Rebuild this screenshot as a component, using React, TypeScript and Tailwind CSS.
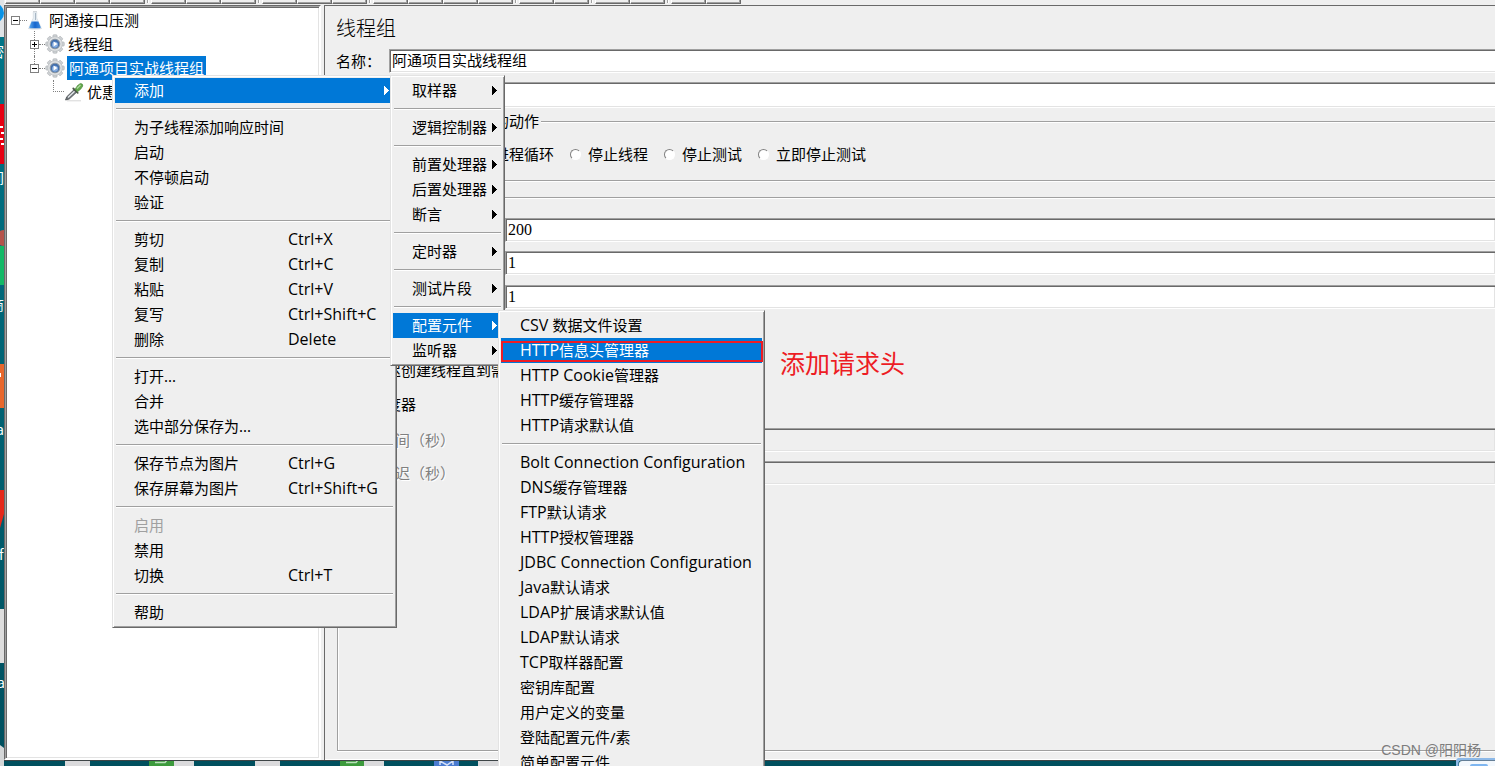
import clsx from "clsx";
import type { ReactNode } from "react";

interface MenuEntry {
  label: string;
  keys?: string;
  disabled?: boolean;
  active?: boolean;
  submenu?: ReactNode;
}

type MenuGroup = MenuEntry[];

const SUNKEN =
  "border border-t-[#a0a0a0] border-l-[#a0a0a0] border-b-white border-r-white shadow-[inset_1px_1px_0_#696969,inset_-1px_-1px_0_#e3e3e3]";
const RAISED =
  "border border-t-[#e3e3e3] border-l-[#e3e3e3] border-b-[#696969] border-r-[#696969] shadow-[inset_1px_1px_0_#ffffff,inset_-1px_-1px_0_#a0a0a0]";
const ETCHED =
  "border border-r-0 border-[#a0a0a0] shadow-[0_1px_0_#ffffff,inset_1px_1px_0_#ffffff]";

const toolbarGroups = [4, 3, 3, 4, 2, 2, 2];

const configGroups: MenuGroup[] = [
  [
    { label: "CSV 数据文件设置" },
    { label: "HTTP信息头管理器", active: true },
    { label: "HTTP Cookie管理器" },
    { label: "HTTP缓存管理器" },
    { label: "HTTP请求默认值" },
  ],
  [
    { label: "Bolt Connection Configuration" },
    { label: "DNS缓存管理器" },
    { label: "FTP默认请求" },
    { label: "HTTP授权管理器" },
    { label: "JDBC Connection Configuration" },
    { label: "Java默认请求" },
    { label: "LDAP扩展请求默认值" },
    { label: "LDAP默认请求" },
    { label: "TCP取样器配置" },
    { label: "密钥库配置" },
    { label: "用户定义的变量" },
    { label: "登陆配置元件/素" },
    { label: "简单配置元件" },
  ],
];

const Arrow = () => (
  <svg viewBox="0 0 5 9" className="h-[9px] w-[5px] shrink-0 fill-current" shapeRendering="crispEdges">
    <path d="M0 0h1v1h1v1h1v1h1v1h1v1h-1v1h-1v1h-1v1h-1v1h-1z" />
  </svg>
);

// latin runs are set one size larger than the Chinese text beside them
const MenuText = ({ text }: { text: string }) => (
  <>
    {text.split(/([A-Za-z+ ]+)/).map((part, index) =>
      index % 2 === 1 ? (
        <span key={index} className="whitespace-pre font-['Open_Sans',sans-serif] text-base leading-5">
          {part}
        </span>
      ) : (
        part
      ),
    )}
  </>
);

interface MenuProps {
  groups: MenuGroup[];
  className: string;
  hasArrows?: boolean;
}

const Menu = ({ groups, className, hasArrows }: MenuProps) => (
  <div role="menu" className={clsx("absolute bg-[#efefef] p-[2px] text-[15px] text-black", RAISED, className)}>
    {groups.map((group, index) => (
      <ul key={index}>
        {index > 0 && (
          <li role="separator" className="mx-px h-3 pt-[5px]">
            <div className="h-[2px] border-b border-t border-b-white border-t-[#a0a0a0]" />
          </li>
        )}
        {group.map((item) => (
          <li key={item.label} className="relative">
            <button
              role="menuitem"
              disabled={item.disabled}
              className={clsx(
                "flex h-[25px] w-full items-center whitespace-nowrap pl-[19px] text-left leading-[25px]",
                item.active && "bg-[#0078d7] text-white",
                item.disabled && "text-[#a0a0a0]",
              )}
            >
              <span className={item.keys ? "w-[154px]" : "flex-1"}>
                <MenuText text={item.label} />
              </span>
              {item.keys && (
                <span>
                  <MenuText text={item.keys} />
                </span>
              )}
              {(hasArrows || item.submenu) && (
                <span className="mr-[5px]">
                  <Arrow />
                </span>
              )}
            </button>
            {item.active && !item.submenu && (
              <div className="pointer-events-none absolute -right-px bottom-[1px] left-0 top-[3px] border-2 border-[#ed1c24]" />
            )}
            {item.submenu}
          </li>
        ))}
      </ul>
    ))}
  </div>
);

const addGroups: MenuGroup[] = [
  [{ label: "取样器" }],
  [{ label: "逻辑控制器" }],
  [{ label: "前置处理器" }, { label: "后置处理器" }, { label: "断言" }],
  [{ label: "定时器" }],
  [{ label: "测试片段" }],
  [
    {
      label: "配置元件",
      active: true,
      submenu: <Menu groups={configGroups} className="-top-[3px] left-[105px] z-20 w-[267px]" />,
    },
    { label: "监听器" },
  ],
];

const contextGroups: MenuGroup[] = [
  [
    {
      label: "添加",
      active: true,
      submenu: <Menu groups={addGroups} hasArrows className="-top-[3px] left-[275px] z-10 w-[115px]" />,
    },
  ],
  [{ label: "为子线程添加响应时间" }, { label: "启动" }, { label: "不停顿启动" }, { label: "验证" }],
  [
    { label: "剪切", keys: "Ctrl+X" },
    { label: "复制", keys: "Ctrl+C" },
    { label: "粘贴", keys: "Ctrl+V" },
    { label: "复写", keys: "Ctrl+Shift+C" },
    { label: "删除", keys: "Delete" },
  ],
  [{ label: "打开..." }, { label: "合并" }, { label: "选中部分保存为..." }],
  [
    { label: "保存节点为图片", keys: "Ctrl+G" },
    { label: "保存屏幕为图片", keys: "Ctrl+Shift+G" },
  ],
  [{ label: "启用", disabled: true }, { label: "禁用" }, { label: "切换", keys: "Ctrl+T" }],
  [{ label: "帮助" }],
];

const FlaskIcon = () => (
  <svg viewBox="0 0 16 20" className="h-5 w-4 shrink-0">
    <defs>
      <linearGradient id="liquid" x1="0" x2="1">
        <stop offset="0" stopColor="#5aa8ee" />
        <stop offset="0.5" stopColor="#1766cc" />
        <stop offset="1" stopColor="#3f8de0" />
      </linearGradient>
    </defs>
    <ellipse cx="8" cy="18.4" rx="7" ry="1.2" fill="#d5d9de" />
    <path d="M6.3 2h3.4v6l4.2 9q.3 1.400-1 1.400H3.100q-1.300 0-1-1.400l4.200-9z" fill="#e6eef5" stroke="#d3dae0" strokeWidth=".7" />
    <path d="M4.600 11.500h6.800l2.300 5.700q.1 1-1 1H3.300q-1.100 0-1-1z" fill="url(#liquid)" />
    <path d="M8.500 3v7" stroke="#a9b7c4" strokeWidth="1" />
    <path d="M6 1.500h4" stroke="#d2d6da" strokeWidth="1" />
  </svg>
);

const GearIcon = () => (
  <svg viewBox="0 0 20 20" className="h-5 w-5 shrink-0">
    <g fill="#cdd0d3" stroke="#a4a8ac" strokeWidth=".5">
      {[0, 45, 90, 135, 180, 225, 270, 315].map((angle) => (
        <rect key={angle} x="7.900" y=".7" width="4.200" height="4.500" rx="1" transform={`rotate(${angle} 10 10)`} />
      ))}
    </g>
    <circle cx="10" cy="10" r="7.300" fill="#dfe1e3" stroke="#b4b8bc" strokeWidth=".6" />
    <circle cx="10" cy="10" r="4.800" fill="#426fae" stroke="#8d979f" strokeWidth="1" />
    <circle cx="10" cy="10.800" r="3" fill="#86ade0" />
    <path d="M8.600 7.600 12.400 10l-3.800 2.400z" fill="#fff" />
  </svg>
);

const DropperIcon = () => (
  <svg viewBox="0 0 20 20" className="h-5 w-5 shrink-0">
    <path d="M3 18.800h14" stroke="#d6d6d6" />
    <path d="m1.500 18 1.200-3.200 7.500-7.300 2.600 2.600-7.600 7z" fill="#6d7378" stroke="#3f4346" strokeWidth=".7" />
    <path d="m4 15.500 6.600-6.300" stroke="#e5e9ec" strokeWidth="1.300" />
    <path d="m9.300 6.500 4.400 4.300" stroke="#4d5a4a" strokeWidth="1.800" strokeLinecap="round" />
    <path d="M11 7.200q2.500-4.600 5.300-5.700 2.700-.2 2.500 2.500-1.200 3-5.200 5.700z" fill="#62a84c" stroke="#47843a" strokeWidth=".6" />
    <path d="m13 6.500 3.500-3.500" stroke="#b2dca2" strokeWidth="1.200" />
  </svg>
);

const Expander = ({ open }: { open?: boolean }) => (
  <button aria-label={open ? "折叠" : "展开"} className="h-[9px] w-[9px] shrink-0">
    <svg viewBox="0 0 9 9" className="block h-[9px] w-[9px]" fill="none" shapeRendering="crispEdges">
      <path d="M.5.5h8v8h-8z" fill="#fff" stroke="#808080" />
      <path d="M2 4.500h5" stroke="#000" />
      {!open && <path d="M4.500 2v5" stroke="#000" />}
    </svg>
  </button>
);

const Tree = () => (
  <ul role="tree" className="text-[15px] leading-6">
    <li role="treeitem">
      <div className="flex h-6 items-center pl-1">
        <Expander open />
        <span className="w-[7px] border-t border-dotted border-[#808080]" />
        <FlaskIcon />
        <span className="ml-[6px]">阿通接口压测</span>
      </div>
      <ul role="group">
        <li role="treeitem" className="relative flex h-6 items-center pl-[23px]">
          <span className="absolute -top-px bottom-0 left-[27px] border-l border-dotted border-[#808080]" />
          <span className="relative flex">
            <Expander />
          </span>
          <span className="w-[6px] border-t border-dotted border-[#808080]" />
          <GearIcon />
          <span className="ml-[2px] px-[1px]">线程组</span>
        </li>
        <li role="treeitem">
          <div className="relative flex h-6 items-center pl-[23px]">
            <span className="absolute left-[27px] top-0 h-2 border-l border-dotted border-[#808080]" />
            <Expander open />
            <span className="w-[6px] border-t border-dotted border-[#808080]" />
            <GearIcon />
            <span className="ml-[2px] bg-[#0078d7] px-[2px] text-white">阿通项目实战线程组</span>
          </div>
          <div className="flex h-6 items-center pl-[46px]">
            <span className="mb-3 h-3 w-[11px] border-b border-l border-dotted border-[#808080]" />
            <DropperIcon />
            <span className="ml-[3px]">优惠</span>
          </div>
        </li>
      </ul>
    </li>
  </ul>
);

const Toolbar = () => (
  <div className="flex h-[5px] overflow-hidden bg-[#efefef] pl-px">
    {toolbarGroups.map((count, group) => (
      <div key={group} className="flex">
        {group > 0 && <span className="mx-[2px] h-[3px] w-[2px] border-l border-r border-l-[#a0a0a0] border-r-white" />}
        {Array.from({ length: count }, (_, i) => (
          <button
            key={i}
            aria-label={`工具 ${group + 1}-${i + 1}`}
            className="h-1 w-[35px] border-b border-l border-r border-b-[#696969] border-l-white border-r-[#696969] shadow-[inset_-1px_-1px_0_#a0a0a0]"
          />
        ))}
      </div>
    ))}
  </div>
);

interface FieldProps {
  id: string;
  label: string;
  value?: string;
  disabled?: boolean;
  className: string;
}

const Field = ({ id, label, value, disabled, className }: FieldProps) => (
  <div className={clsx("flex h-6 items-center", className)}>
    <label
      htmlFor={id}
      className={clsx("w-[155px] shrink-0 whitespace-nowrap", disabled && "text-[#808080] [text-shadow:1px_1px_0_white]")}
    >
      {label}
    </label>
    <input
      id={id}
      defaultValue={value}
      disabled={disabled}
      className={clsx(
        "-mr-px h-6 min-w-0 flex-1 px-[2px] font-['Liberation_Serif',serif] text-base leading-5",
        SUNKEN,
        disabled ? "bg-[#efefef]" : "bg-white",
      )}
    />
  </div>
);

const Check = ({ label, className }: { label: string; className: string }) => (
  <label className={clsx("flex h-6 items-center gap-2 whitespace-nowrap", className)}>
    <input type="checkbox" className={clsx("h-[13px] w-[13px] appearance-none bg-white", SUNKEN)} />
    {label}
  </label>
);

const errorActions = ["继续", "启动下一进程循环", "停止线程", "停止测试", "立即停止测试"];

const ThreadGroupForm = () => (
  <form className="flex min-w-0 flex-1 flex-col overflow-hidden border-l border-t border-[#696969] bg-[#efefef] pb-[9px] pl-[11px] pt-[10px] text-[15px] leading-5 shadow-[inset_0_-1px_0_#ffffff]">
    <h1 className="text-xl font-light leading-6">线程组</h1>

    <div className="mt-[9px] flex items-center">
      <label htmlFor="name" className="w-[53px] shrink-0">
        名称：
      </label>
      <input
        id="name"
        defaultValue="阿通项目实战线程组"
        className={clsx("-mr-2 h-6 min-w-0 flex-1 bg-white px-[2px] pb-[3px]", SUNKEN)}
      />
    </div>
    <div className="mt-[9px] flex items-center">
      <label htmlFor="comment" className="w-[53px] shrink-0">
        注释：
      </label>
      <input id="comment" className={clsx("-mr-2 h-[26px] min-w-0 flex-1 bg-white px-[2px]", SUNKEN)} />
    </div>

    <fieldset className={clsx("ml-px mt-[3px] pb-[14px] pl-[14px] pt-[11px]", ETCHED)}>
      <legend className="-ml-[10px] bg-[#efefef] px-[2px]">在取样器错误后要执行的动作</legend>
      <div className="flex h-6 items-center gap-4">
        {errorActions.map((action, index) => (
          <label key={action} className="flex items-center gap-[7px] whitespace-nowrap">
            <input
              type="radio"
              name="on-error"
              defaultChecked={index === 0}
              className="h-[11px] w-[11px] appearance-none rounded-full border border-b-white border-l-[#808080] border-r-white border-t-[#808080] bg-white"
            />
            {action}
          </label>
        ))}
      </div>
    </fieldset>

    <fieldset className={clsx("ml-px mt-[6px] flex-1 pl-3 pt-[11px]", ETCHED)}>
      <legend className="-ml-[6px] bg-[#efefef] px-[2px]">线程属性</legend>
      <Field id="threads" label="线程数：" value="200" className="" />
      <Field id="ramp" label="Ramp-Up时间（秒）：" value="1" className="mt-[9px]" />
      <Field id="loops" label="循环次数" value="1" className="mt-[10px]" />
      <Check label="Same user" className="mt-4" />
      <Check label="延迟创建线程直到需要" className="mt-[9px]" />
      <Check label="调度器" className="mt-[10px]" />
      <Field id="duration" label="持续时间（秒）" disabled className="mt-3" />
      <Field id="delay" label="启动延迟（秒）" disabled className="mt-[9px]" />
    </fieldset>
  </form>
);

// slices of the desktop icons that peek out past the window edge
const DesktopLeft = () => (
  <svg width="4" height="766" className="w-1 shrink-0">
    <rect width="4" height="37" fill="#dfe3e6" />
    <circle cx="-6" cy="13" r="10" fill="#0a93e6" />
    <rect y="104" width="4" height="60" fill="#e60012" />
    <path d="M0 127h3M1 133h3M0 139h3M1 144h3" stroke="#fff" strokeWidth="2" />
    <circle cx="4" cy="238" r="8" fill="#b5534b" />
    <rect y="246" width="4" height="39" fill="#12b866" />
    <rect y="364" width="4" height="44" fill="#e8672c" />
    <path d="M0 373h1v4h-1z" fill="#fff" />
    <path d="M0 490h4v24l-4 14z" fill="#e5281a" />
    <rect y="609" width="4" height="54" fill="#dedede" />
    <path d="M0 745l4 3v18h-4z" fill="#d4d6d7" />
    <g fill="#fff" fontSize="14" fontFamily="Noto Sans CJK SC, sans-serif">
      <text x="-10" y="57">密</text>
      <text x="-10" y="183">间</text>
      <text x="-10" y="310">商</text>
      <text x="-4" y="435">a</text>
      <text x="-1" y="560">f</text>
      <text x="-3" y="688">a</text>
    </g>
  </svg>
);

const DesktopBottom = () => (
  <svg width="1491" height="6" className="absolute bottom-0 left-1">
    <g fill="#dadadc">
      <rect x="61" width="25" height="6" />
      <rect x="170" width="20" height="6" />
      <rect x="251" width="25" height="6" />
      <rect x="360" width="20" height="6" />
      <rect x="474" width="25" height="6" />
    </g>
    <rect x="145" width="25" height="6" fill="#3c9a3c" />
    <rect x="336" width="24" height="6" fill="#3c9a3c" />
    <path d="M151 2.500h10l2-2.500M342 2.500h10l2-2.500" stroke="#b9dfb9" strokeWidth="1.500" fill="none" />
    <rect x="430" width="25" height="6" fill="#4a7bd0" />
    <path d="M436 5v-4l7 4 6-4v4" stroke="#d4e0f7" strokeWidth="1.500" fill="none" />
    <path d="M0 .5h1491" stroke="#3d4446" />
  </svg>
);

export default function App() {
  return (
    <div className="relative flex h-screen overflow-hidden bg-linear-to-b from-[#00778a] to-[#004f5e] font-['Noto_Sans_CJK_SC',sans-serif] text-black">
      <DesktopLeft />

      <main className="mb-[6px] flex min-w-0 flex-1 flex-col bg-[#efefef]">
        <Toolbar />
        <div className="flex min-h-0 flex-1 gap-[3px]">
          <aside className="flex w-[317px] shrink-0 border border-b-white border-l-[#696969] border-r-white border-t-[#696969]">
            <div className={clsx("flex-1 bg-white pl-px pt-px", SUNKEN)}>
              <Tree />
            </div>
          </aside>
          <ThreadGroupForm />
        </div>
      </main>

      <DesktopBottom />
      <svg width="39" height="8" className="absolute bottom-0 right-0">
        <path d="M1 8V5q0-4 4-4h34" fill="none" stroke="#8db9e8" strokeWidth="3" />
        <path d="M3 8V6q0-3 3-3h33v5z" fill="#f3f8fd" />
        <path d="M14 8q0-2 2-2h14q2 0 2 2z" fill="#7fb6f0" />
      </svg>

      <Menu
        groups={contextGroups}
        className="left-[112px] top-[75px] w-[285px] font-['Noto_Sans','Noto_Sans_CJK_SC',sans-serif]"
      />

      <p className="absolute left-[780px] top-[346px] text-[25px] leading-8 text-[#ed1c24]">添加请求头</p>
      <p className="absolute bottom-[6px] right-[14px] font-['Liberation_Sans','Noto_Sans_CJK_SC',sans-serif] text-sm leading-5 text-[#7d7d7d]">
        CSDN @阳阳杨
      </p>
    </div>
  );
}
